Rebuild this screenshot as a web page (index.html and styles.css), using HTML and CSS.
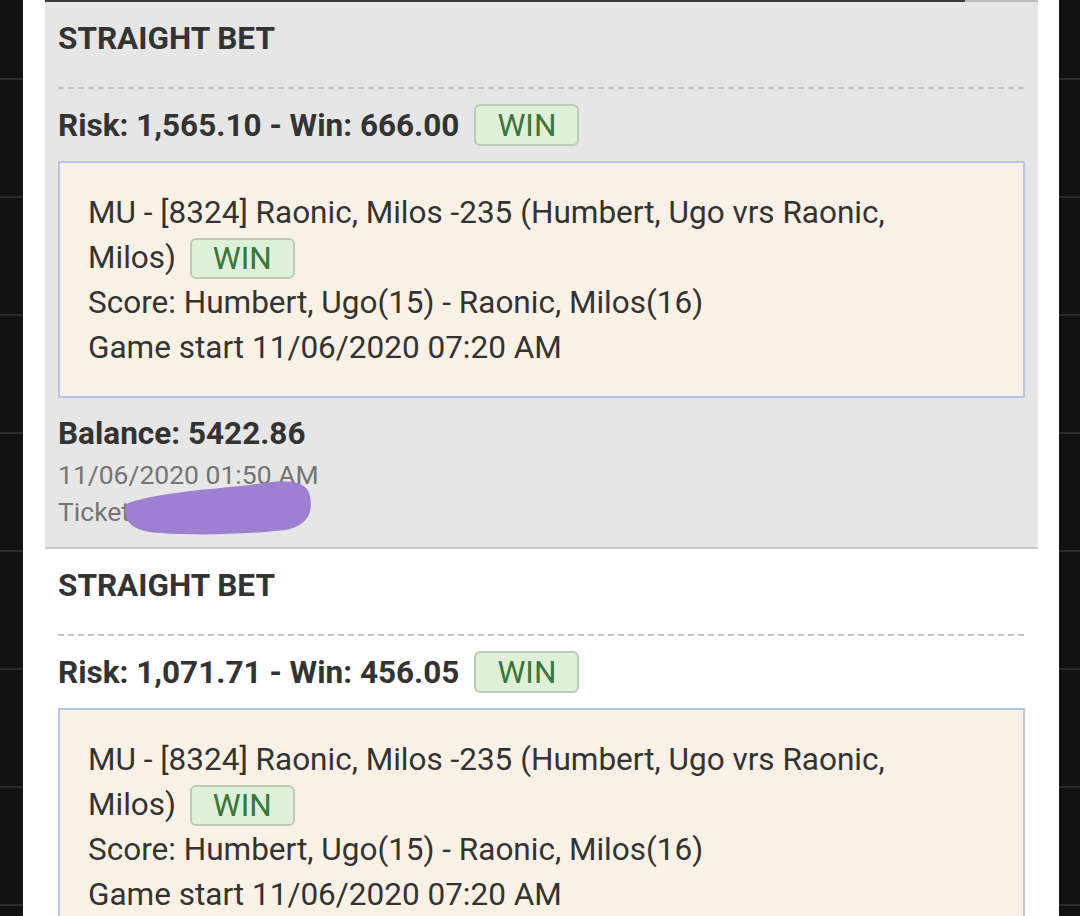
FILE: index.html
```html
<!DOCTYPE html>
<html>
<head>
<meta charset="utf-8">
<link rel="stylesheet" href="styles.css">
</head>
<body>
<div class="screen">
  <div class="edge"></div>
  <div class="gutter"></div>
  <main class="feed">
    <div class="topbar"><span class="topbar-dark"></span><span class="topbar-light"></span></div>

    <section class="ticket ticket-gray">
      <div class="title">STRAIGHT BET</div>
      <div class="dash"></div>
      <div class="risk"><span>Risk: 1,565.10 - Win: 666.00</span><span class="badge">WIN</span></div>
      <div class="box">
        <p class="line"><span>MU - [8324] Raonic, Milos -235 (Humbert, Ugo vrs Raonic,</span> <span>Milos)</span> <span class="badge badge-inline">WIN</span></p>
        <p class="line">Score: Humbert, Ugo(15) - Raonic, Milos(16)</p>
        <p class="line">Game start 11/06/2020 07:20 AM</p>
      </div>
      <div class="balance">Balance: 5422.86</div>
      <div class="meta meta-date">11/06/2020 01:50 AM</div>
      <div class="meta">Ticket #</div>
      <svg class="scribble" width="200" height="66" viewBox="0 0 200 66">
        <path d="M6,30 C30,20 80,16 130,11 C160,6 186,3 190,22 C194,42 184,53 165,56 C130,60 80,62 40,59 C20,58 1,52 6,30 Z" fill="#9e80d3"/>
      </svg>
    </section>

    <section class="ticket">
      <div class="title">STRAIGHT BET</div>
      <div class="dash"></div>
      <div class="risk"><span>Risk: 1,071.71 - Win: 456.05</span><span class="badge">WIN</span></div>
      <div class="box">
        <p class="line"><span>MU - [8324] Raonic, Milos -235 (Humbert, Ugo vrs Raonic,</span> <span>Milos)</span> <span class="badge badge-inline">WIN</span></p>
        <p class="line">Score: Humbert, Ugo(15) - Raonic, Milos(16)</p>
        <p class="line">Game start 11/06/2020 07:20 AM</p>
      </div>
    </section>
  </main>
  <div class="gutter gutter-right"></div>
  <div class="edge edge-right"></div>
</div>
</body>
</html>
```

FILE: styles.css
```css
* { box-sizing: border-box; }
html, body {
  margin: 0;
  padding: 0;
  background: #fff;
  overflow: hidden;
}
body {
  font-family: Roboto, "Liberation Sans", Arial, sans-serif;
  color: #333;
}
.screen {
  display: flex;
  width: 1080px;
  height: 916px;
  overflow: hidden;
}
.edge {
  width: 23px;
  flex: none;
  background: repeating-linear-gradient(to bottom, #121212 0 78px, #2c2c2c 78px 80px, #121212 80px 118px);
}
.edge-right { width: 21px; }
.gutter { width: 22px; flex: none; background: #fff; }
.gutter-right { width: 21px; }
.feed {
  width: 993px;
  flex: none;
  display: flex;
  flex-direction: column;
}
.topbar {
  display: flex;
  height: 2px;
  flex: none;
  background: #e6e6e6;
}
.topbar-dark { width: 920px; background: #3c3c3c; }
.topbar-light { flex: 1; background: #bdbdbd; }

.ticket {
  position: relative;
  padding: 17px 13px 17px;
  flex: none;
}
.ticket-gray {
  background: #e6e6e6;
  border-bottom: 2px solid #c9c9c9;
}
.title {
  font-size: 31.5px;
  font-weight: 700;
  line-height: 40px;
  color: #333;
}
.dash {
  margin-top: 28px;
  height: 2px;
  background: repeating-linear-gradient(to right, #c3c3c3 0 6px, transparent 6px 10px);
}
.risk {
  margin-top: 15px;
  display: flex;
  align-items: center;
  gap: 15px;
  height: 42px;
  font-size: 31.5px;
  font-weight: 700;
  color: #333;
}
.badge {
  display: inline-flex;
  align-items: center;
  justify-content: center;
  width: 105px;
  height: 42px;
  background: #dff0d8;
  border: 2px solid #bccbb5;
  border-radius: 6px;
  color: #3a763b;
  font-size: 31.5px;
  font-weight: 400;
}
.badge-inline {
  height: 41px;
  margin-left: 6px;
  vertical-align: middle;
  position: relative;
  top: -1px;
}
.box {
  margin-top: 15px;
  background: #faf1e6;
  border: 2px solid #b6c7e5;
  padding: 27px 60px 26px 28px;
}
.line {
  margin: 0;
  font-size: 31.5px;
  line-height: 45px;
  color: #333;
}
.balance {
  margin-top: 16px;
  font-size: 31.5px;
  font-weight: 700;
  line-height: 40px;
  color: #333;
}
.meta {
  font-size: 26.5px;
  line-height: 37px;
  color: #747474;
}
.meta-date { margin-top: 2px; }
.scribble {
  position: absolute;
  left: 75px;
  top: 472px;
}
```
